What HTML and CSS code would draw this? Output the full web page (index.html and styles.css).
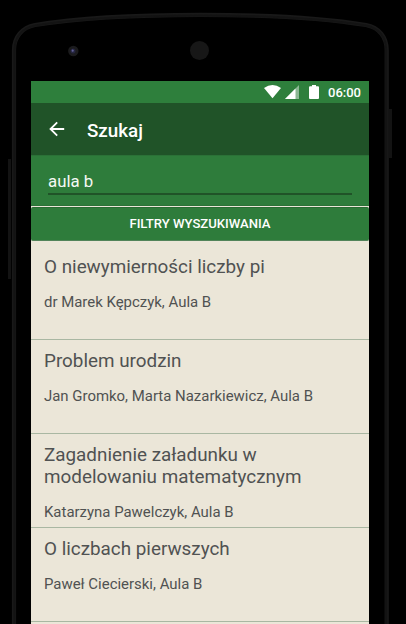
FILE: index.html
```html
<!DOCTYPE html>
<html lang="pl">
<head>
<meta charset="utf-8">
<title>Szukaj</title>
<link rel="stylesheet" href="styles.css">
</head>
<body>
<div class="phone">
  <svg class="frame" width="406" height="624" viewBox="0 0 406 624" aria-hidden="true">
    <path d="M9.500 159V279M390.500 109V158" fill="none" stroke="#131313" stroke-width="3"/>
    <path d="M14 630V50C14 37 22 27.500 35 25C83 17 142 14.800 200.500 14.800S318 17 366 25C379 27.500 386.700 37 386.700 50V630" fill="none" stroke="#191919" stroke-width="4.200"/>
    <path d="M14.500 630V50C14.500 37 22 28 35 25.500C83 17.500 142 15.500 200.500 15.500S318 17.500 366 25.500C379 28 386.200 37 386.200 50V630" fill="none" stroke="#131313" stroke-width="2"/>
    <circle cx="73.300" cy="51" r="5.200" fill="#1b1b1d"/>
    <circle cx="73" cy="51" r="2.500" fill="#25253f"/>
    <circle cx="72.700" cy="50.700" r="1.100" fill="#62629a"/>
    <circle cx="199.500" cy="50.500" r="9.500" fill="#171717"/>
  </svg>
  <main class="screen">
    <div class="status">
      <svg class="signals" width="56" height="16" viewBox="0 0 56 16" fill="#fff" aria-hidden="true">
        <path d="M0 4Q8.500-1.800 17 4L8.500 14.200Z"/>
        <path d="M21 15L35 1V15Z" opacity=".45"/>
        <path d="M21 15L31.500 4.500V15Z"/>
        <path d="M48 1h4v1.300h2q1 0 1 1V14q0 1-1 1h-8q-1 0-1-1V3.300q0-1 1-1h2Z"/>
      </svg>
      <span class="clock">06:00</span>
    </div>
    <header class="appbar">
      <svg class="back" width="16" height="16" viewBox="0 0 16 16" fill="none" stroke="#fff" stroke-width="1.800" aria-hidden="true"><path d="M15.200 8H1.500M8.200 1.300L1.500 8l6.700 6.700"/></svg>
      <h1 class="title">Szukaj</h1>
    </header>
    <div class="search"><div class="field">aula b</div></div>
    <div class="filters">FILTRY WYSZUKIWANIA</div>
    <ul class="results">
      <li class="result"><h2 class="topic">O niewymierności liczby pi</h2><p class="speaker">dr Marek Kępczyk, Aula B</p></li>
      <li class="result"><h2 class="topic">Problem urodzin</h2><p class="speaker">Jan Gromko, Marta Nazarkiewicz, Aula B</p></li>
      <li class="result"><h2 class="topic">Zagadnienie załadunku w modelowaniu matematycznym</h2><p class="speaker">Katarzyna Pawelczyk, Aula B</p></li>
      <li class="result"><h2 class="topic">O liczbach pierwszych</h2><p class="speaker">Paweł Ciecierski, Aula B</p></li>
    </ul>
  </main>
</div>
</body>
</html>
```
FILE: styles.css
```css
* { box-sizing: border-box; }
body { margin: 0; background: #000; font-family: Roboto, sans-serif; }
.phone { position: relative; width: 406px; height: 624px; padding: 81px 37px 0 31px; overflow: hidden; background: #000; }
.frame { position: absolute; inset: 0; }
.screen { position: relative; width: 338px; height: 543px; overflow: hidden; background: #ebe6d8; }
.status { display: flex; align-items: center; justify-content: flex-end; height: 22px; padding-right: 8px; background: #2e7f3c; color: #fff; }
.signals { margin-right: 8px; }
.clock { font-size: 13px; font-weight: 500; line-height: 23px; }
.appbar { display: flex; align-items: center; height: 52px; padding-left: 18px; background: #205328; color: #fff; }
.title { margin: 3px 0 0 22px; font-size: 18.800px; font-weight: 500; line-height: 24px; }
.search { height: 51px; padding: 13px 17px 0; background: #2e7c3b; border-top: 1px solid #2b7137; border-bottom: 1px solid #2b7137; }
.field { height: 26px; border-bottom: 2px solid #205328; color: #f5f8f4; font-size: 16.800px; line-height: 25px; }
.filters { height: 34px; margin-top: 1px; border-top: 1px solid #2a6a34; border-bottom: 1px solid #52845a; border-radius: 2px; background: #2e7c3b; color: #fff; font-size: 13.100px; font-weight: 500; line-height: 32px; text-align: center; }
.results { margin: 0; padding: 0; list-style: none; color: #505252; }
.result { height: 94px; padding: 10px 13px 0; border-bottom: 1px solid #a9b7a2; }
.result:first-child { height: 99px; padding-top: 15px; }
.topic { margin: 0; font-size: 18.850px; font-weight: 400; line-height: 22px; }
.speaker { margin: 15px 0 0; font-size: 14.950px; line-height: 18px; white-space: nowrap; }
```
